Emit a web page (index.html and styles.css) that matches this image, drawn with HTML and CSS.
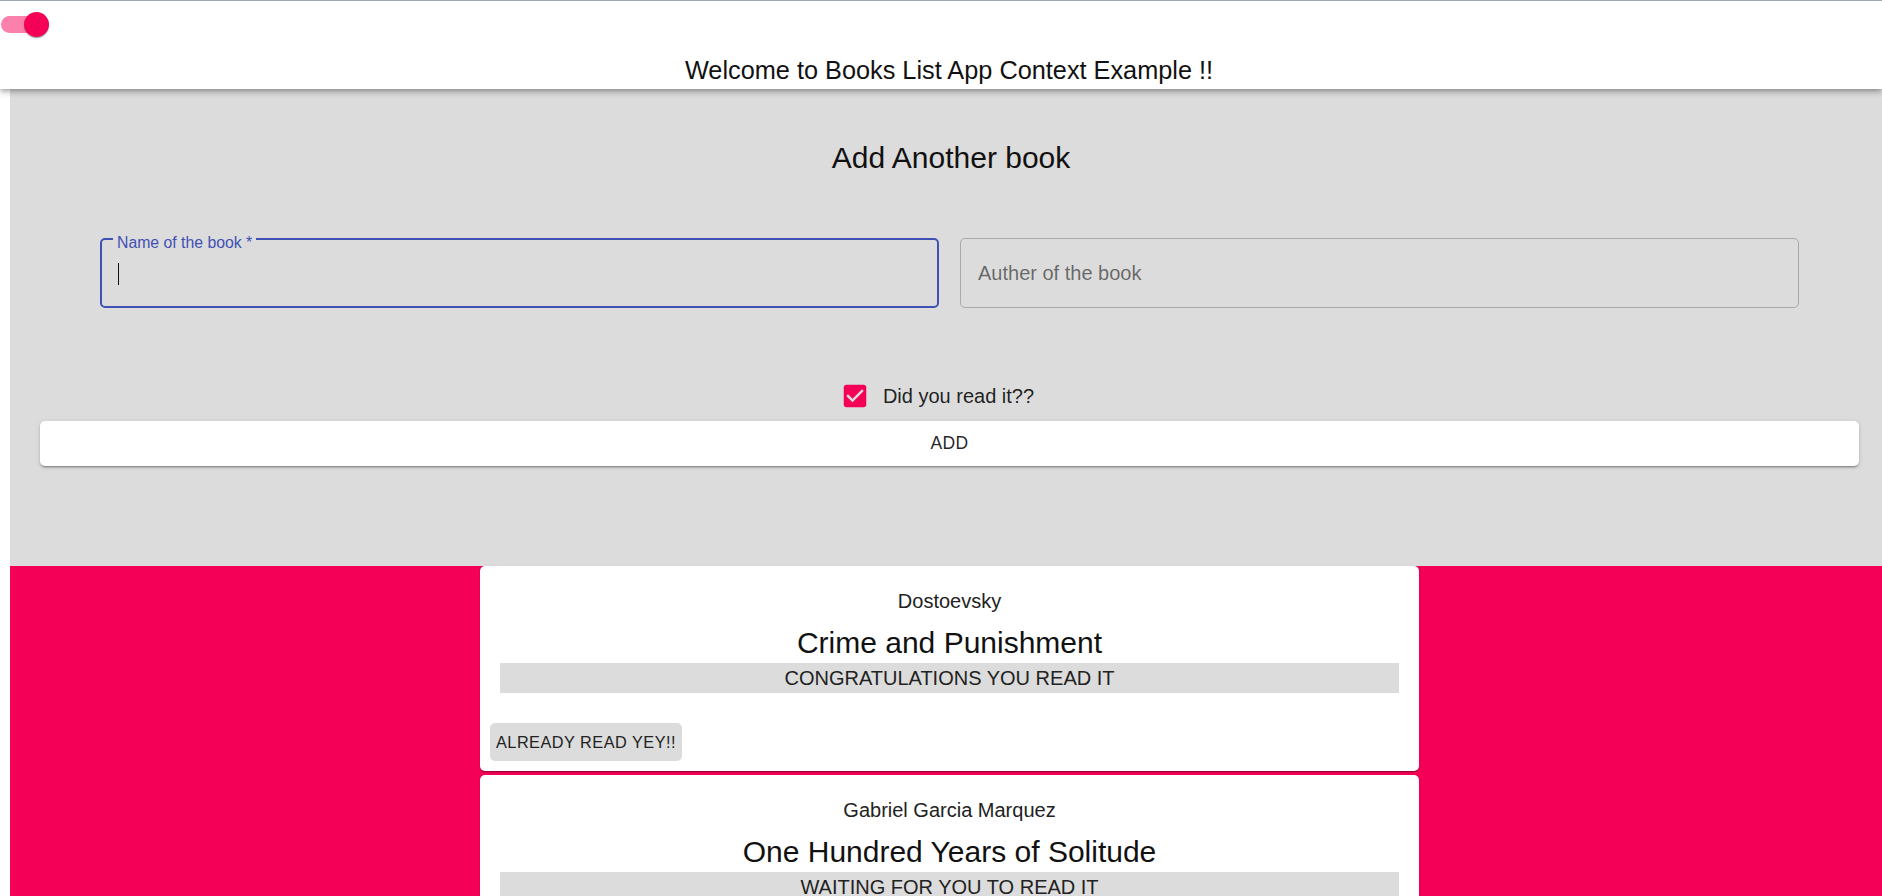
FILE: index.html
```
<!DOCTYPE html>
<html lang="en">
<head>
<meta charset="utf-8">
<title>Books List App</title>
<link rel="stylesheet" href="styles.css">
</head>
<body>
<header class="appbar">
  <div class="switch-row">
    <div class="switch">
      <span class="switch-track"></span>
      <span class="switch-thumb"></span>
    </div>
  </div>
  <h1 class="app-title">Welcome to Books List App Context Example !!</h1>
</header>

<main class="page">
  <section class="add-section">
    <h2 class="add-title">Add Another book</h2>
    <div class="fields">
      <div class="field field-focused">
        <span class="field-label">Name of the book *</span>
        <span class="caret"></span>
      </div>
      <div class="field">
        <span class="placeholder">Auther of the book</span>
      </div>
    </div>
    <div class="check-row">
      <label class="check-label">
        <span class="check-box">
          <svg viewBox="0 0 24 24" width="30" height="30"><path fill="#f50057" d="M19 3H5c-1.11 0-2 .9-2 2v14c0 1.1.89 2 2 2h14c1.11 0 2-.9 2-2V5c0-1.1-.89-2-2-2zm-9 14l-5-5 1.41-1.41L10 14.17l7.59-7.59L19 8l-9 9z"/></svg>
        </span>
        <span class="check-text">Did you read it??</span>
      </label>
    </div>
    <button class="add-btn">ADD</button>
  </section>

  <section class="books">
    <article class="card">
      <div class="card-content">
        <p class="author">Dostoevsky</p>
        <h3 class="book-title">Crime and Punishment</h3>
        <p class="status">CONGRATULATIONS YOU READ IT</p>
      </div>
      <div class="card-actions">
        <button class="small-btn">ALREADY READ YEY!!</button>
      </div>
    </article>
    <article class="card">
      <div class="card-content">
        <p class="author">Gabriel Garcia Marquez</p>
        <h3 class="book-title">One Hundred Years of Solitude</h3>
        <p class="status">WAITING FOR YOU TO READ IT</p>
      </div>
      <div class="card-actions">
        <button class="small-btn">READ IT NOW</button>
      </div>
    </article>
  </section>
</main>
</body>
</html>
```

FILE: styles.css
```
* { box-sizing: border-box; }

html {
  overflow-x: hidden;
}

body {
  margin: 0;
  font-family: "Liberation Sans", Arial, sans-serif;
  color: rgba(0, 0, 0, 0.87);
  background: #ffffff;
}

.appbar {
  position: relative;
  z-index: 2;
  width: 1882px;
  height: 89px;
  background: #ffffff;
  border-top: 1px solid #9aaab0;
  box-shadow: 0px 2px 4px -1px rgba(0,0,0,0.2), 0px 4px 5px 0px rgba(0,0,0,0.14), 0px 1px 10px 0px rgba(0,0,0,0.12);
  display: flex;
  flex-direction: column;
}

.switch-row {
  height: 54px;
  display: flex;
  align-items: flex-start;
}

.switch {
  position: relative;
  width: 50px;
  height: 25px;
  margin-top: 11px;
}

.switch-track {
  position: absolute;
  left: 1px;
  top: 4px;
  width: 43px;
  height: 17px;
  border-radius: 9px;
  background: #fb80ab;
}

.switch-thumb {
  position: absolute;
  left: 24px;
  top: 0;
  width: 25px;
  height: 25px;
  border-radius: 50%;
  background: #f50057;
  box-shadow: 0px 2px 1px -1px rgba(0,0,0,0.2), 0px 1px 1px 0px rgba(0,0,0,0.14), 0px 1px 3px 0px rgba(0,0,0,0.12);
}

.app-title {
  margin: 0;
  padding-left: 16px;
  font-size: 25.3px;
  line-height: 30px;
  font-weight: 400;
  text-align: center;
  color: #111;
}

.page {
  width: 1882px;
  margin-left: 10px;
}

.add-section {
  background: #dcdcdc;
  padding: 49px 0 100px;
  display: flex;
  flex-direction: column;
}

.add-title {
  margin: 0;
  font-size: 30px;
  line-height: 40px;
  font-weight: 400;
  text-align: center;
  color: #111;
}

.fields {
  margin-top: 60px;
  padding: 0 93px 0 90px;
  display: grid;
  grid-template-columns: 1fr 1fr;
  column-gap: 21px;
}

.field {
  position: relative;
  height: 70px;
  border: 1px solid #a9a9a9;
  border-radius: 5px;
  display: flex;
  align-items: center;
  padding: 0 17px;
}

.field-focused {
  border: 2px solid #3f51b5;
  padding: 0 16px;
}

.field-label {
  position: absolute;
  left: 11px;
  top: -6px;
  padding: 0 4px;
  background: #dcdcdc;
  font-size: 15.8px;
  line-height: 18px;
  color: #3f51b5;
}

.caret {
  display: block;
  width: 1px;
  height: 22px;
  background: #111;
  margin-top: 2px;
}

.placeholder {
  font-size: 20px;
  color: rgba(0, 0, 0, 0.54);
}

.check-row {
  margin-top: 62px;
  height: 51px;
  display: flex;
  justify-content: center;
  align-items: center;
}

.check-label {
  display: flex;
  align-items: center;
  gap: 13px;
  margin-left: -28px;
}

.check-box {
  display: flex;
  width: 30px;
  height: 30px;
}

.check-text {
  font-size: 20px;
  line-height: 30px;
}

.add-btn {
  margin: 0 33px 0 30px;
  height: 45px;
  border: none;
  border-radius: 5px;
  background: #ffffff;
  font-family: "Liberation Sans", Arial, sans-serif;
  font-size: 17.5px;
  letter-spacing: 0.3px;
  color: rgba(0, 0, 0, 0.87);
  box-shadow: 0px 3px 1px -2px rgba(0,0,0,0.2), 0px 2px 2px 0px rgba(0,0,0,0.14), 0px 1px 5px 0px rgba(0,0,0,0.12);
}

.books {
  background: #f50057;
  min-height: 400px;
  display: flex;
  flex-direction: column;
  align-items: center;
  gap: 4px;
  padding-right: 3px;
}

.card {
  width: 939px;
  background: #ffffff;
  border-radius: 5px;
  box-shadow: 0px 2px 1px -1px rgba(0,0,0,0.2), 0px 1px 1px 0px rgba(0,0,0,0.14), 0px 1px 3px 0px rgba(0,0,0,0.12);
}

.card-content {
  padding: 20px;
  text-align: center;
}

.author {
  margin: 0 0 7px;
  font-size: 20px;
  line-height: 30px;
  color: #222;
}

.book-title {
  margin: 0;
  font-size: 30px;
  line-height: 40px;
  font-weight: 400;
  color: #111;
}

.status {
  margin: 0;
  background: #dcdcdc;
  font-size: 20px;
  line-height: 30px;
  color: #222;
}

.card-actions {
  padding: 10px;
  display: flex;
}

.small-btn {
  height: 38px;
  padding: 0 6px;
  border: none;
  border-radius: 5px;
  background: #dcdcdc;
  font-family: "Liberation Sans", Arial, sans-serif;
  font-size: 16.25px;
  letter-spacing: 0.5px;
  color: #222;
}
```
